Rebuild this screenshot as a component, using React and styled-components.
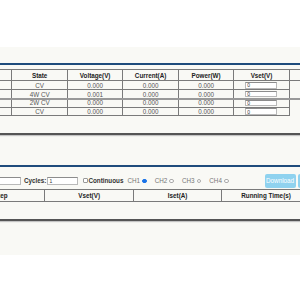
import React from 'react';
import styled, { createGlobalStyle } from 'styled-components';

const GlobalStyle = createGlobalStyle`
  html, body {
    margin: 0;
    background: #fff;
    overflow: hidden;
  }
  body {
    font-family: "Liberation Sans", Arial, sans-serif;
  }
`;

// Off-white page band that holds both panels.
const Main = styled.div`
  margin-top: 47px;
  padding: 16px 0 34px;
  background: #f9f9f5;
  overflow: hidden;
`;

const Panel = styled.section`
  position: relative;
  border-top: 2px solid #1f4c7c;
  border-bottom: 2px solid #555;
  box-shadow: 0 1px 1px #c4c4c4;
  padding-bottom: ${p => p.$pad}px;
  & + & {
    margin-top: 30px;
  }
`;

// Gray rule that lies across the monitor table.
const Rule = styled.div`
  position: absolute;
  left: 0;
  right: 0;
  top: 32.8px;
  height: 1.8px;
  background: #999;
`;

const Grid = styled.table`
  width: ${p => p.$width}px;
  margin-left: -44px;
  margin-top: ${p => p.$top}px;
  border-collapse: collapse;
  table-layout: fixed;
  font-size: 6.3px;
`;

const HeadCell = styled.th`
  height: ${p => p.$h}px;
  padding: 0;
  border: 1px solid #7a7a7a;
  color: #222;
  font-weight: bold;
  text-align: center;
  line-height: 9px;
  white-space: nowrap;
  overflow: hidden;
`;

const Cell = styled.td`
  height: 7.75px;
  padding: 0;
  border: 1px solid #7a7a7a;
  color: #555;
  text-align: center;
  line-height: 7px;
`;

const InputCell = styled(Cell)`
  text-align: left;
  padding-left: 11px;
`;

const TextBox = styled.input`
  flex: none;
  box-sizing: border-box;
  display: block;
  width: ${p => p.$w || 31}px;
  height: ${p => p.$h || 7.5}px;
  margin: 0 0 0 ${p => p.$ml || 0}px;
  padding: 0 1px;
  border: 1px solid #b9b9b9;
  border-top-color: #8c8c8c;
  background: #fff;
  font-family: inherit;
  font-size: 5px;
  color: #333;
  outline: none;
`;

const Toolbar = styled.div`
  display: flex;
  align-items: center;
  height: 14px;
  padding: 6.5px 0 1px;
  margin-left: -11px;
  white-space: nowrap;
  font-size: 6.3px;
`;

const Label = styled.span`
  flex: none;
  margin-left: ${p => p.$ml || 0}px;
  font-weight: ${p => (p.$bold ? 'bold' : 'normal')};
  color: ${p => (p.$bold ? '#333' : '#777')};
`;

const Check = styled.span`
  flex: none;
  box-sizing: border-box;
  width: 5px;
  height: 5px;
  margin-left: 5px;
  border: 1px solid #999;
  border-radius: 1px;
  background: #fff;
`;

const Radio = styled.span`
  flex: none;
  box-sizing: border-box;
  width: 4.7px;
  height: 4.7px;
  margin-left: 2px;
  border-radius: 50%;
  border: 1px solid ${p => (p.$on ? '#1a73e8' : '#aaa')};
  background: ${p => (p.$on ? '#1a73e8' : '#fff')};
`;

const Button = styled.button`
  flex: none;
  height: 14px;
  width: 31px;
  margin-left: ${p => p.$ml}px;
  padding: 0;
  border: none;
  border-radius: 2px;
  background: #8fd2ef;
  color: #fff;
  font-family: inherit;
  font-size: 6.3px;
`;

const monitorHead = ['', 'State', 'Voltage(V)', 'Current(A)', 'Power(W)', 'Vset(V)', ''];
const monitorRows = [
  ['a', 'CV', '0.000', '0.000', '0.000'],
  ['b', '4W CV', '0.001', '0.000', '0.000'],
  ['c', '2W CV', '0.000', '0.000', '0.000'],
  ['d', 'CV', '0.000', '0.000', '0.000'],
];
const listHead = ['Step', 'Vset(V)', 'Iset(A)', 'Running Time(s)'];
const channels = ['CH1', 'CH2', 'CH3', 'CH4'];

export default function App() {
  return (
    <>
      <GlobalStyle />
      <Main>
        <Panel $pad={17}>
          <Grid $top={4} $width={monitorHead.length * 55.6}>
            <thead>
              <tr>
                {monitorHead.map((h, i) => <HeadCell key={i} $h={10.4}>{h}</HeadCell>)}
              </tr>
            </thead>
            <tbody>
              {monitorRows.map(row => (
                <tr key={row[0]}>
                  {row.map((v, i) => <Cell key={i}>{i === 0 ? '' : v}</Cell>)}
                  <InputCell><TextBox defaultValue="0" $w={32} $h={6.5} /></InputCell>
                </tr>
              ))}
            </tbody>
          </Grid>
          <Rule />
        </Panel>

        <Panel $pad={17}>
          <Toolbar>
            <TextBox defaultValue="" $w={32} />
            <Label $bold $ml={3}>Cycles:</Label>
            <TextBox defaultValue="1" $ml={1} />
            <Check />
            <Label $bold>Continuous</Label>
            {channels.map((c, i) => (
              <React.Fragment key={c}>
                <Label $ml={i === 0 ? 4 : 8}>{c}</Label>
                <Radio $on={i === 0} />
              </React.Fragment>
            ))}
            <Button $ml={36}>Download</Button>
            <Button $ml={2}>Start</Button>
          </Toolbar>
          <Grid $top={0} $width={listHead.length * 88.7}>
            <thead>
              <tr>
                {listHead.map(h => <HeadCell key={h} $h={11}>{h}</HeadCell>)}
              </tr>
            </thead>
          </Grid>
        </Panel>
      </Main>
    </>
  );
}
